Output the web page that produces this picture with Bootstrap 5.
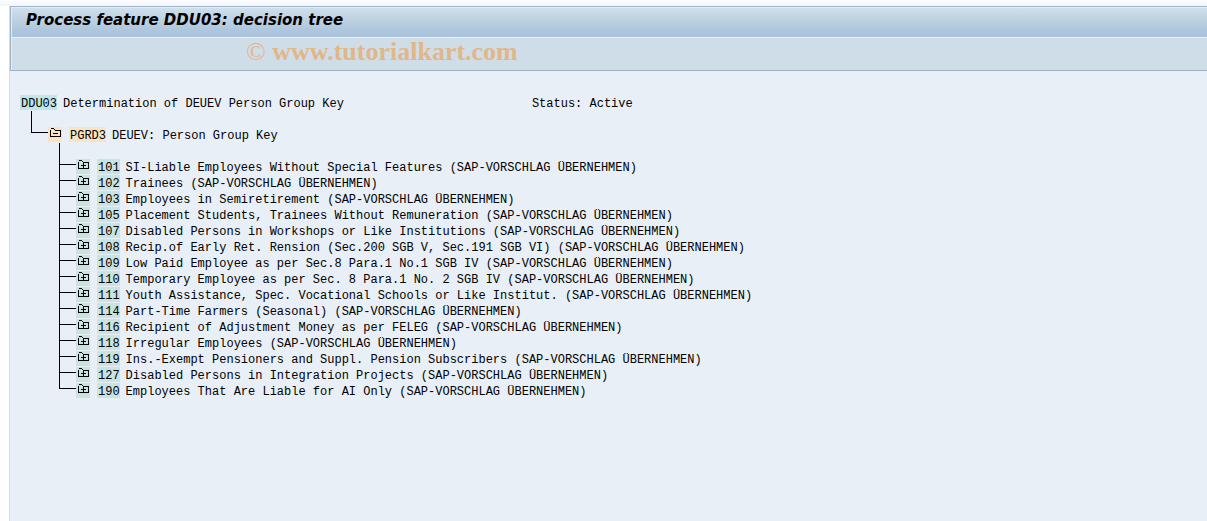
<!DOCTYPE html>
<html lang="en">
<head>
<meta charset="utf-8">
<meta name="viewport" content="width=device-width, initial-scale=1">
<title>Process feature DDU03: decision tree</title>
<link href="https://cdn.jsdelivr.net/npm/bootstrap@5.3.0/dist/css/bootstrap.min.css" rel="stylesheet">
<style>
  body { background: #fff; color: #000; }
  .sap-window { margin-left: 9px; border-left: 1px solid #d5dae8; background: #e8eff7; }
  .top-strip { height: 6px; margin-left: -10px; background: linear-gradient(#fbfcfe, #f3f5fa); }
  .sap-header { border: 1px solid #9fb3c6; border-right: 0; background: #cfdde8; }
  .title-bar { height: 31px; padding-left: 14px; border-top: 1px solid #e3edf5; border-left: 1px solid #e3edf5; border-bottom: 1px solid #e8f0f8; background: linear-gradient(#cfdfeb, #bdd0e0 45%, #aec7de 75%, #abc2db); }
  .title-bar h1 { font: italic bold 15px/25px "DejaVu Sans", Verdana, sans-serif; }
  .tool-bar { height: 32px; padding-left: 234px; border-left: 1px solid #e3edf5; }
  .site-mark { font: bold 26px/28px "Liberation Serif", "Times New Roman", serif; color: #e2b788; }
  .site-mark span { font-weight: normal; }
  .tree { padding: 24px 10px; font: 12px/16px "Liberation Mono", "Courier New", monospace; }
  .tree-row { height: 16px; white-space: nowrap; }
  .code { height: 15px; line-height: 18px; margin-right: 6px; padding-left: 1px; }
  .label { line-height: 18px; }
  .code-root { background: #bfe7e9; }
  .code-mid { background: #fae3c3; }
  .code-leaf { background: #c9e3e3; }
  .stem { width: 1px; background: #000; height: 16px; }
  .tree-root > .stem, .elbow-root { margin-left: 11px; }
  .elbow { height: 6px; width: 17px; border-left: 1px solid #000; border-bottom: 1px solid #000; }
  .leaf-list { padding-left: 39px; }
  .leaf-list .tree-row { border-left: 1px solid #000; }
  .leaf-list .tree-row:last-child { border-left-color: transparent; }
  .leaf-list .elbow { margin-left: -1px; }
  .toggle { width: 14px; height: 15px; margin-right: 7px; }
  .toggle svg { width: 14px; height: 12px; }
  .status { margin-left: 188px; }
</style>
<script src="https://cdn.jsdelivr.net/npm/bootstrap@5.3.0/dist/js/bootstrap.bundle.min.js"></script>
</head>
<body>
<svg class="d-none" aria-hidden="true">
  <symbol id="folder-closed" viewBox="0 0 14 12"><path d="M2.500 9.500V2.500M3 1.500H6M6.500 2V3M7 3.500H12.500V9.500H2M5 6.500H10M7.500 4V9" fill="none" stroke="#000" shape-rendering="crispEdges"/></symbol>
  <symbol id="folder-open" viewBox="0 0 14 12"><path d="M2.500 9.500V2.500M3 1.500H6M6.500 2V3M7 3.500H12.500V9.500H2M5 6.500H10" fill="none" stroke="#000" shape-rendering="crispEdges"/></symbol>
</svg>
<div class="sap-window min-vh-100">
  <div class="top-strip"></div>
  <header class="sap-header">
    <div class="title-bar"><h1 class="mb-0">Process feature DDU03: decision tree</h1></div>
    <div class="tool-bar"><div class="site-mark"><span>©</span> www.tutorialkart.com</div></div>
  </header>
  <main class="tree">
    <div class="tree-row d-flex"><span class="code code-root">DDU03</span><span class="label">Determination of DEUEV Person Group Key</span><span class="label status">Status: Active</span></div>
    <div class="tree-root"><div class="stem"></div></div>
    <div class="tree-row d-flex"><span class="elbow elbow-root"></span><button type="button" class="toggle code-mid border-0 p-0 d-flex" aria-label="Collapse PGRD3"><svg><use href="#folder-open"/></svg></button><span class="code code-mid">PGRD3</span><span class="label">DEUEV: Person Group Key</span></div>
    <div class="leaf-list"><div class="stem"></div><ul class="list-unstyled mb-0" id="leaves"></ul></div>
  </main>
</div>
<script>
  const leaves = [
    ["101", "SI-Liable Employees Without Special Features"],
    ["102", "Trainees"],
    ["103", "Employees in Semiretirement"],
    ["105", "Placement Students, Trainees Without Remuneration"],
    ["107", "Disabled Persons in Workshops or Like Institutions"],
    ["108", "Recip.of Early Ret. Rension (Sec.200 SGB V, Sec.191 SGB VI)"],
    ["109", "Low Paid Employee as per Sec.8 Para.1 No.1 SGB IV"],
    ["110", "Temporary Employee as per Sec. 8 Para.1 No. 2 SGB IV"],
    ["111", "Youth Assistance, Spec. Vocational Schools or Like Institut."],
    ["114", "Part-Time Farmers (Seasonal)"],
    ["116", "Recipient of Adjustment Money as per FELEG"],
    ["118", "Irregular Employees"],
    ["119", "Ins.-Exempt Pensioners and Suppl. Pension Subscribers"],
    ["127", "Disabled Persons in Integration Projects"],
    ["190", "Employees That Are Liable for AI Only"]
  ];
  document.getElementById("leaves").innerHTML = leaves.map(([code, text]) =>
    `<li class="tree-row d-flex"><span class="elbow"></span><button type="button" class="toggle code-leaf border-0 p-0 d-flex" aria-label="Expand ${code}"><svg><use href="#folder-closed"/></svg></button><span class="code code-leaf">${code}</span><span class="label">${text} (SAP-VORSCHLAG ÜBERNEHMEN)</span></li>`
  ).join("");
</script>
</body>
</html>
